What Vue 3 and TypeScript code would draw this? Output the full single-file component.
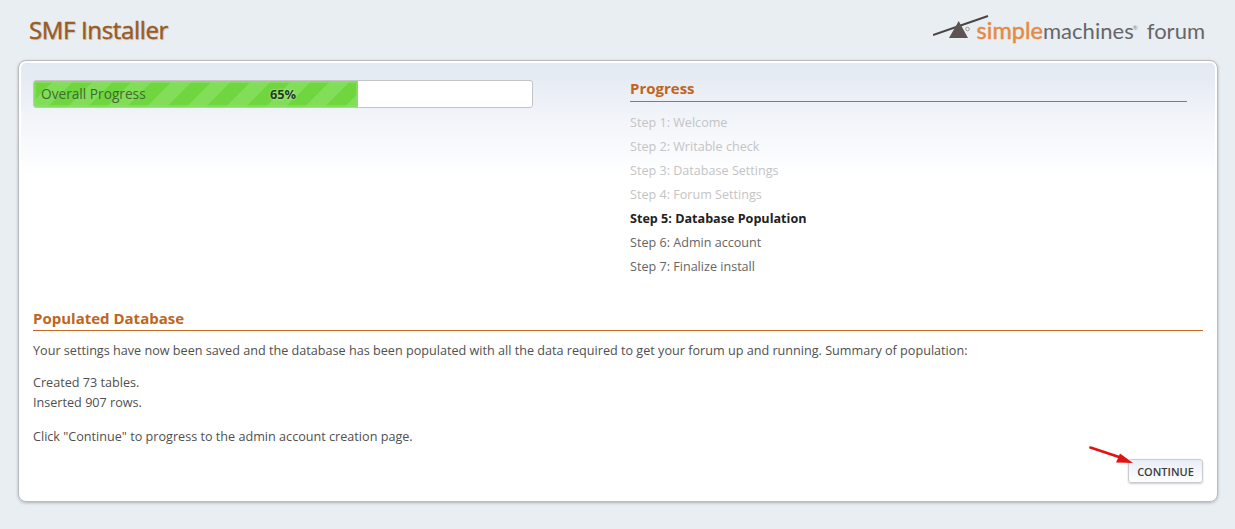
<script setup lang="ts">
const steps: { label: string; state: string }[] = [
  { label: 'Step 1: Welcome', state: 'done' },
  { label: 'Step 2: Writable check', state: 'done' },
  { label: 'Step 3: Database Settings', state: 'done' },
  { label: 'Step 4: Forum Settings', state: 'done' },
  { label: 'Step 5: Database Population', state: 'current' },
  { label: 'Step 6: Admin account', state: 'todo' },
  { label: 'Step 7: Finalize install', state: 'todo' }
]
const percent = 65
</script>

<template>
  <div class="page">
    <header class="top">
      <h1 class="title">SMF Installer</h1>
      <div class="logo">
        <svg class="mark" width="60" height="26" viewBox="0 0 60 26">
          <path d="M0 20 L55 1" stroke="#4a4444" stroke-width="2" fill="none" />
          <path d="M16 23 L25.700 6 L35 23 Z" fill="#5d5350" />
          <circle cx="34.500" cy="14" r="1.800" fill="none" stroke="#8d8784" stroke-width="0.800" />
        </svg>
        <span class="logo-text"><span class="simple">simple</span><span class="machines">machines</span><sup class="reg">®</sup><span class="forum">forum</span></span>
      </div>
    </header>
    <main class="card">
      <div class="upper">
        <div class="overall">
          <div class="bar">
            <div class="fill" :style="{ width: percent + '%' }"></div>
            <span class="bar-label">Overall Progress</span>
            <span class="bar-pct">{{ percent }}%</span>
          </div>
        </div>
        <aside class="progress">
          <h2 class="heading first">Progress</h2>
          <ul class="steps">
            <li v-for="s in steps" :key="s.label" :class="s.state">{{ s.label }}</li>
          </ul>
        </aside>
      </div>
      <section class="content">
        <h2 class="heading">Populated Database</h2>
        <p class="p1">Your settings have now been saved and the database has been populated with all the data required to get your forum up and running. Summary of population:</p>
        <p class="p2">Created 73 tables.<br />Inserted 907 rows.</p>
        <p class="p3">Click "Continue" to progress to the admin account creation page.</p>
        <div class="actions">
          <button class="continue" type="button">CONTINUE</button>
          <svg class="arrow" width="46" height="22" viewBox="0 0 46 22">
            <path d="M1.500 2.500 L33 13" stroke="#e01414" stroke-width="2.600" fill="none" stroke-linecap="round" />
            <path d="M44 18 L27 17.500 L31 8.500 Z" fill="#e01414" />
          </svg>
        </div>
      </section>
    </main>
  </div>
</template>

<style>
html, body { margin: 0; background: #e9eef3; }
</style>

<style scoped>
.page {
  height: 529px;
  box-sizing: border-box;
  padding: 0 18px 0 18px;
  font-family: "Open Sans", "Noto Sans", sans-serif;
  overflow: hidden;
}
.top {
  height: 60px;
  display: flex;
  justify-content: space-between;
  align-items: flex-start;
}
.title {
  margin: 14px 0 0 11px;
  font-size: 24px;
  line-height: 32px;
  font-weight: 400;
  color: #9a5b22;
  -webkit-text-stroke: 0.4px #9a5b22;
  letter-spacing: -0.35px;
  text-shadow: 1px 1px 1px #bbb;
}
.logo {
  display: flex;
  align-items: flex-start;
  margin: 15px 12px 0 0;
}
.mark { margin-right: -16px; }
.logo-text {
  font-family: Lato, "Open Sans", sans-serif;
  font-size: 22px;
  line-height: 30px;
  white-space: nowrap;
}
.simple { color: #e58a45; font-size: 23.500px; -webkit-text-stroke: 0.5px #e58a45; }
.machines { color: #666; letter-spacing: 0.05px; }
.forum { color: #666; }
.reg { font-size: 6px; color: #888; vertical-align: 9px; line-height: 0; margin-left: -1px; margin-right: 9px; }
.card {
  box-sizing: border-box;
  height: 442px;
  width: 1200px;
  padding: 19px 14px 0 14px;
  background: linear-gradient(#e3e9f2 0, #e7ecf4 20px, #f1f4f9 55px, #ffffff 115px);
  border: 1px solid #b8bcc0;
  border-radius: 8px;
  box-shadow: inset 0 0 0 2px #fff, 0 1px 3px rgba(0, 0, 0, 0.25);
}
.upper {
  display: flex;
  height: 229px;
}
.overall { width: 597px; flex: none; }
.bar {
  position: relative;
  box-sizing: border-box;
  width: 500px;
  height: 28px;
  background: #fff;
  border: 1px solid #c4c4c4;
  border-radius: 3px;
  overflow: hidden;
  font-size: 13.700px;
  line-height: 26px;
}
.fill {
  position: absolute;
  left: 0;
  top: 0;
  bottom: 0;
  background: repeating-linear-gradient(135deg, #70d640 0, #70d640 14px, #82de59 14px, #82de59 28px);
  box-shadow: inset 0 0 0 2px rgba(140, 224, 106, 0.7);
}
.bar-label {
  position: absolute;
  left: 7px;
  top: 0;
  color: #3f6b30;
}
.bar-pct {
  position: absolute;
  left: 0;
  right: 0;
  top: 0;
  text-align: center;
  font-size: 12.800px;
  font-weight: 700;
  color: #1c3d12;
  text-shadow: 0 0 2px #d6f2c8;
}
.progress { width: 557px; flex: none; }
.heading {
  margin: 0;
  font-size: 15px;
  line-height: 18px;
  padding-bottom: 3px;
  font-weight: 700;
  color: #c0651c;
  border-bottom: 1px solid #c4691f;
}
.heading.first {
  line-height: 16px;
  padding-bottom: 5px;
}
.steps {
  list-style: none;
  margin: 9px 0 0;
  padding: 0;
  font-size: 12.600px;
  line-height: 24px;
}
.steps .done { color: #c4c4c4; }
.steps .current { color: #222; font-weight: 700; }
.steps .todo { color: #666; }
.content {
  font-size: 12.630px;
  line-height: 20px;
  color: #505050;
}
.content p { margin: 0; }
.p1 { padding-top: 10px; }
.p2 { padding-top: 12px; }
.p3 { padding-top: 14px; }
.actions {
  position: relative;
  display: flex;
  justify-content: flex-end;
  margin-top: 12px;
}
.continue {
  box-sizing: border-box;
  width: 75px;
  height: 24px;
  padding: 0;
  font-family: inherit;
  font-size: 11px;
  font-weight: 600;
  color: #3c3c3c;
  background: linear-gradient(#e9edf5, #fff);
  border: 1px solid #c8ccd2;
  border-radius: 3px;
  box-shadow: 0 1px 2px rgba(0, 0, 0, 0.2);
}
.arrow {
  position: absolute;
  right: 68px;
  top: -14px;
}
</style>
